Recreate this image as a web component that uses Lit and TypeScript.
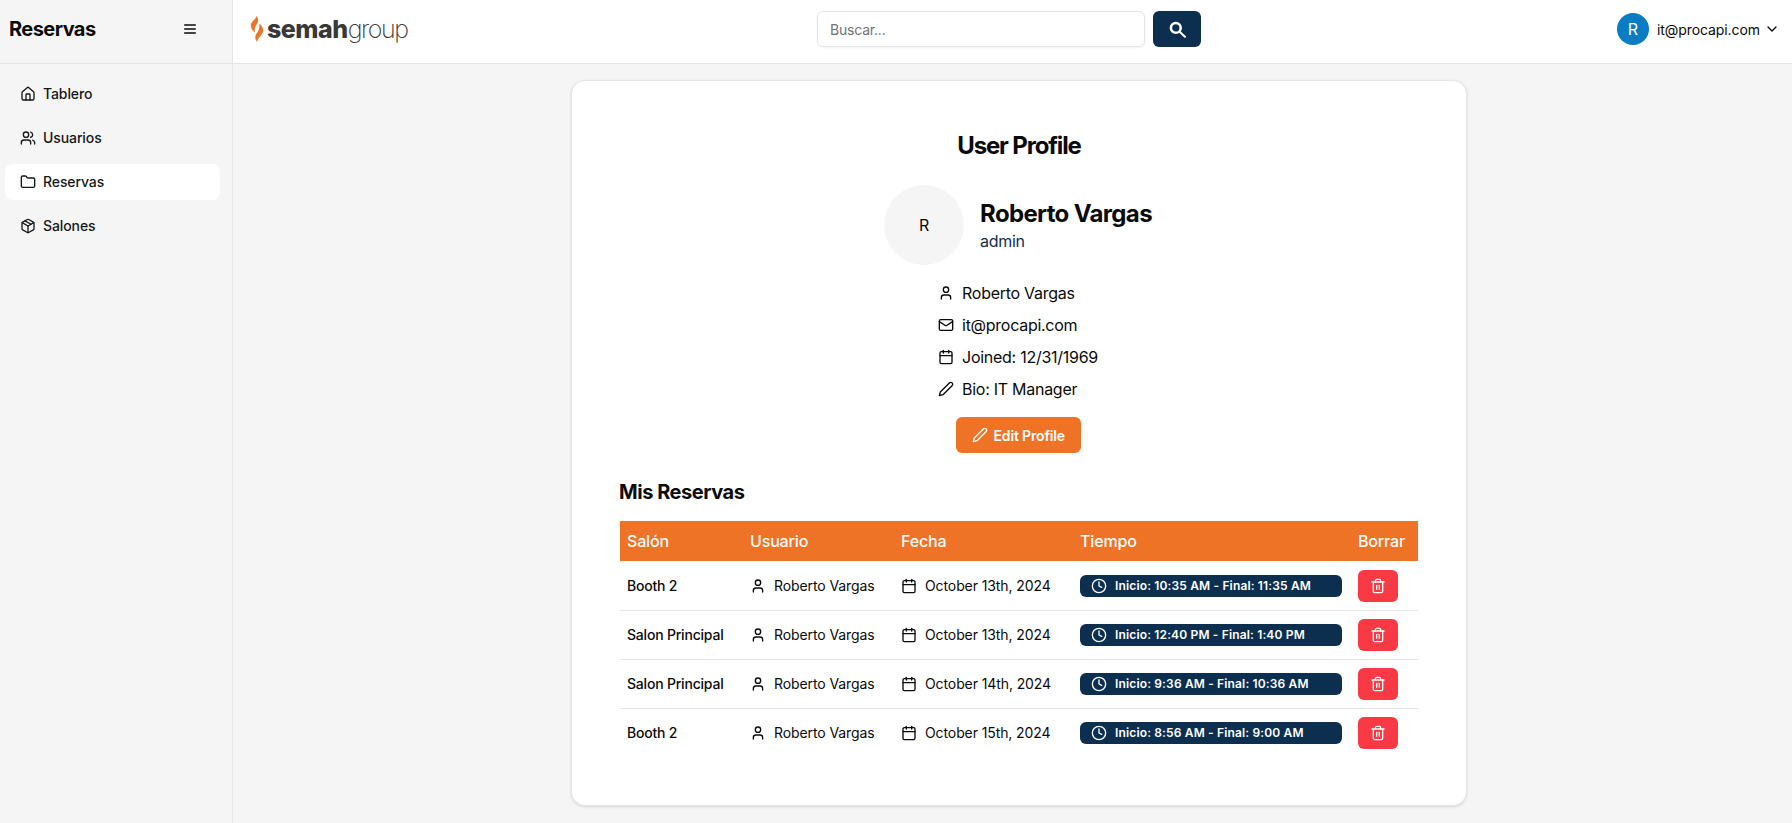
import { LitElement, html, svg, css } from 'lit';
import { customElement } from 'lit/decorators.js';

const lucide = (body: unknown, size = 16) => html`
  <svg class="icon" width=${size} height=${size} viewBox="0 0 24 24" fill="none" stroke="currentColor"
    stroke-width="2" stroke-linecap="round" stroke-linejoin="round">${body}</svg>
`;

const icons = {
  house: svg`<path d="M15 21v-8a1 1 0 0 0-1-1h-4a1 1 0 0 0-1 1v8"/><path d="M3 10a2 2 0 0 1 .709-1.528l7-5.999a2 2 0 0 1 2.582 0l7 5.999A2 2 0 0 1 21 10v9a2 2 0 0 1-2 2H5a2 2 0 0 1-2-2z"/>`,
  users: svg`<path d="M16 21v-2a4 4 0 0 0-4-4H6a4 4 0 0 0-4 4v2"/><circle cx="9" cy="7" r="4"/><path d="M22 21v-2a4 4 0 0 0-3-3.87"/><path d="M16 3.13a4 4 0 0 1 0 7.75"/>`,
  folder: svg`<path d="M20 20a2 2 0 0 0 2-2V8a2 2 0 0 0-2-2h-7.9a2 2 0 0 1-1.69-.9L9.6 3.9A2 2 0 0 0 7.93 3H4a2 2 0 0 0-2 2v13a2 2 0 0 0 2 2Z"/>`,
  box: svg`<path d="m7.5 4.27 9 5.15"/><path d="M21 8a2 2 0 0 0-1-1.73l-7-4a2 2 0 0 0-2 0l-7 4A2 2 0 0 0 3 8v8a2 2 0 0 0 1 1.73l7 4a2 2 0 0 0 2 0l7-4A2 2 0 0 0 21 16Z"/><path d="m3.3 7 8.7 5 8.7-5"/><path d="M12 22V12"/>`,
  menu: svg`<line x1="4" y1="6" x2="20" y2="6"/><line x1="4" y1="12" x2="20" y2="12"/><line x1="4" y1="18" x2="20" y2="18"/>`,
  user: svg`<path d="M19 21v-2a4 4 0 0 0-4-4H9a4 4 0 0 0-4 4v2"/><circle cx="12" cy="7" r="4"/>`,
  mail: svg`<rect width="20" height="16" x="2" y="4" rx="2"/><path d="m22 7-8.97 5.7a1.94 1.94 0 0 1-2.06 0L2 7"/>`,
  calendar: svg`<path d="M8 2v4"/><path d="M16 2v4"/><rect width="18" height="18" x="3" y="4" rx="2"/><path d="M3 10h18"/>`,
  pen: svg`<path d="M17 3a2.85 2.83 0 1 1 4 4L7.5 20.5 2 22l1.5-5.5Z"/>`,
  trash: svg`<path d="M3 6h18"/><path d="M19 6v14c0 1-1 2-2 2H7c-1 0-2-1-2-2V6"/><path d="M8 6V4c0-1 1-2 2-2h4c1 0 2 1 2 2v2"/><line x1="10" y1="11" x2="10" y2="17"/><line x1="14" y1="11" x2="14" y2="17"/>`,
  clock: svg`<circle cx="12" cy="12" r="10"/><polyline points="12 6 12 12 16 14"/>`,
  chevron: svg`<path d="m6 9 6 6 6-6"/>`,
};

interface Reserva {
  salon: string;
  fecha: string;
  tiempo: string;
}

const navItems = [
  { label: 'Tablero', icon: icons.house, active: false },
  { label: 'Usuarios', icon: icons.users, active: false },
  { label: 'Reservas', icon: icons.folder, active: true },
  { label: 'Salones', icon: icons.box, active: false },
];

const reservas: Reserva[] = [
  { salon: 'Booth 2', fecha: 'October 13th, 2024', tiempo: 'Inicio: 10:35 AM - Final: 11:35 AM' },
  { salon: 'Salon Principal', fecha: 'October 13th, 2024', tiempo: 'Inicio: 12:40 PM - Final: 1:40 PM' },
  { salon: 'Salon Principal', fecha: 'October 14th, 2024', tiempo: 'Inicio: 9:36 AM - Final: 10:36 AM' },
  { salon: 'Booth 2', fecha: 'October 15th, 2024', tiempo: 'Inicio: 8:56 AM - Final: 9:00 AM' },
];

@customElement('app-root')
export class AppRoot extends LitElement {
  static styles = css`
    :host {
      display: flex;
      height: 100vh;
      overflow: hidden;
      background: #f5f5f5;
      color: #0a0a0a;
      font-family: Inter, 'Liberation Sans', sans-serif;
      font-size: 14px;
    }

    .icon {
      flex: none;
      display: block;
    }

    .sidebar {
      width: 233px;
      flex: none;
      box-sizing: border-box;
      border-right: 1px solid #e5e5e5;
    }

    .sidebar-head {
      height: 64px;
      box-sizing: border-box;
      border-bottom: 1px solid #e5e5e5;
      padding: 0 34px 5px 9px;
      display: flex;
      align-items: center;
      justify-content: space-between;
    }

    .sidebar-title {
      font-size: 20px;
      font-weight: 700;
      letter-spacing: -0.55px;
    }

    .nav {
      display: flex;
      flex-direction: column;
      gap: 8px;
      padding: 12px 12px 0 5px;
    }

    .nav-item {
      height: 36px;
      box-sizing: border-box;
      padding: 0 15px 1px;
      border-radius: 8px;
      display: flex;
      align-items: center;
      gap: 7px;
      font-weight: 500;
      letter-spacing: -0.1px;
      color: #171717;
    }

    .nav-item.active {
      background: #fff;
    }

    .content {
      flex: 1;
      min-width: 0;
    }

    .topbar {
      height: 64px;
      box-sizing: border-box;
      background: #fff;
      border-bottom: 1px solid #e5e5e5;
      padding-bottom: 5px;
      display: grid;
      grid-template-columns: 584px 384px 1fr;
      align-items: center;
    }

    .logo {
      display: flex;
      align-items: center;
      padding-left: 17px;
      gap: 3px;
    }

    .wordmark {
      font-size: 25px;
      line-height: 30px;
      letter-spacing: -0.5px;
      color: #383838;
    }

    .wordmark b {
      font-weight: 800;
    }

    .wordmark span {
      font-weight: 200;
      letter-spacing: -1.4px;
    }

    .search {
      display: flex;
      gap: 8px;
    }

    .search-input {
      flex: 1;
      height: 36px;
      box-sizing: border-box;
      border: 1px solid #e5e5e5;
      border-radius: 6px;
      padding: 0 12px;
      display: flex;
      align-items: center;
      color: #737373;
      letter-spacing: -0.2px;
      box-shadow: 0 1px 2px rgba(0, 0, 0, 0.05);
    }

    .search-btn {
      width: 48px;
      height: 36px;
      border-radius: 6px;
      background: #0c2f4f;
      color: #fff;
      display: flex;
      align-items: center;
      justify-content: center;
    }

    .user {
      justify-self: end;
      padding-right: 12px;
      display: flex;
      align-items: center;
      gap: 8px;
      letter-spacing: -0.08px;
    }

    .user .icon {
      margin-left: -4px;
    }

    .user-avatar {
      width: 32px;
      height: 32px;
      border-radius: 50%;
      background: #0a7cc4;
      color: #fff;
      font-size: 16px;
      display: flex;
      align-items: center;
      justify-content: center;
    }

    .main {
      padding: 16px 0 0 338px;
    }

    .card {
      width: 896px;
      height: 726px;
      box-sizing: border-box;
      background: #fff;
      border: 1px solid #e5e5e5;
      border-radius: 14px;
      padding: 48px;
      box-shadow: 0 1px 3px rgba(0, 0, 0, 0.12);
    }

    .card h1 {
      margin: 0 0 23px;
      padding-top: 1px;
      font-size: 24px;
      line-height: 32px;
      font-weight: 700;
      text-align: center;
      letter-spacing: -1.15px;
    }

    .profile {
      display: flex;
      flex-direction: column;
      align-items: center;
      padding-right: 2px;
    }

    .profile-head {
      display: flex;
      align-items: center;
      gap: 16px;
    }

    .avatar {
      width: 80px;
      height: 80px;
      border-radius: 50%;
      background: #f5f5f5;
      font-size: 16px;
      display: flex;
      align-items: center;
      justify-content: center;
    }

    .name {
      padding-top: 1px;
      margin-bottom: -1px;
      font-size: 24px;
      line-height: 32px;
      font-weight: 700;
      letter-spacing: -0.65px;
    }

    .role {
      font-size: 16px;
      line-height: 24px;
      letter-spacing: -0.3px;
      color: #0c2f4f;
    }

    .details {
      margin-top: 16px;
      display: flex;
      flex-direction: column;
      gap: 8px;
    }

    .detail {
      display: flex;
      align-items: center;
      gap: 8px;
      font-size: 16px;
      line-height: 24px;
      letter-spacing: -0.27px;
    }

    .edit-btn {
      margin-top: 16px;
      height: 36px;
      box-sizing: border-box;
      width: 125px;
      padding: 0 16px;
      border-radius: 6px;
      background: #ef7326;
      color: #fff;
      font-weight: 600;
      letter-spacing: -0.15px;
      white-space: nowrap;
      display: flex;
      align-items: center;
      gap: 6px;
    }

    h2 {
      margin: 24px 0 15px -1px;
      padding-top: 1px;
      font-size: 20px;
      line-height: 28px;
      font-weight: 700;
      letter-spacing: -0.46px;
    }

    table {
      width: 100%;
      border-collapse: collapse;
      table-layout: fixed;
    }

    .col-salon { width: 122px; }
    .col-user { width: 151px; }
    .col-date { width: 179px; }
    .col-time { width: 278px; }

    th {
      height: 40px;
      padding: 0 8px;
      background: #ef7326;
      color: #fff;
      font-size: 16px;
      font-weight: 500;
      letter-spacing: -0.16px;
      text-align: left;
    }

    td {
      height: 49px;
      padding: 0 8px;
      box-sizing: border-box;
      border-bottom: 1px solid #e5e5e5;
      font-weight: 500;
      letter-spacing: -0.2px;
      white-space: nowrap;
    }

    tbody tr:first-child td {
      padding-top: 1px;
    }

    th:first-child,
    td:first-child {
      padding-left: 7px;
    }

    tr:last-child td {
      border-bottom: none;
    }

    .with-icon {
      display: flex;
      align-items: center;
      gap: 8px;
      font-weight: 400;
      letter-spacing: -0.1px;
    }

    .pill {
      height: 22px;
      width: 262px;
      box-sizing: border-box;
      padding: 0 11px;
      border-radius: 6px;
      background: #0c2f4f;
      color: #fff;
      font-size: 12px;
      font-weight: 600;
      letter-spacing: 0.15px;
      display: flex;
      align-items: center;
      gap: 8px;
    }

    .delete {
      width: 40px;
      height: 32px;
      border-radius: 6px;
      background: #f93a44;
      color: #fff;
      display: flex;
      align-items: center;
      justify-content: center;
    }
  `;

  private renderRow(r: Reserva) {
    return html`
      <tr>
        <td>${r.salon}</td>
        <td><div class="with-icon">${lucide(icons.user)}Roberto Vargas</div></td>
        <td><div class="with-icon">${lucide(icons.calendar)}${r.fecha}</div></td>
        <td><div class="pill">${lucide(icons.clock)}${r.tiempo}</div></td>
        <td><div class="delete">${lucide(icons.trash)}</div></td>
      </tr>
    `;
  }

  render() {
    return html`
      <aside class="sidebar">
        <div class="sidebar-head">
          <span class="sidebar-title">Reservas</span>
          ${lucide(icons.menu)}
        </div>
        <nav class="nav">
          ${navItems.map(
            (item) => html`
              <div class="nav-item ${item.active ? 'active' : ''}">${lucide(item.icon)}${item.label}</div>
            `
          )}
        </nav>
      </aside>

      <div class="content">
        <header class="topbar">
          <div class="logo">
            <svg width="14" height="26" viewBox="0 0 14 26" fill="#ef7326">
              <path d="M6.5 0C8.8 3 8.4 6 6.8 8.2 5.2 10.4 4.2 12.4 5 16.4 1.8 14.4 0 11 1.2 7.8 2.2 5 5.5 3.5 6.5 0Z"/>
              <path d="M9.3 7.8C12.2 10 14 13 12.8 16.2 11.6 19.6 8 21.5 7 26 4.8 23 4.7 20.2 6.3 18 7.9 15.8 10 13 9.3 7.8Z"/>
            </svg>
            <div class="wordmark"><b>semah</b><span>group</span></div>
          </div>
          <div class="search">
            <div class="search-input">Buscar...</div>
            <div class="search-btn">
              <svg class="icon" width="17" height="17" viewBox="0 0 16 16" fill="none" stroke="currentColor" stroke-linecap="round">
                <circle cx="6.4" cy="6.5" r="4.6" stroke-width="2.4"/>
                <line x1="10" y1="10.1" x2="15" y2="14.8" stroke-width="1.9"/>
              </svg>
            </div>
          </div>
          <div class="user">
            <div class="user-avatar">R</div>
            <span>it@procapi.com</span>
            ${lucide(icons.chevron)}
          </div>
        </header>

        <main class="main">
          <section class="card">
            <h1>User Profile</h1>
            <div class="profile">
              <div class="profile-head">
                <div class="avatar">R</div>
                <div>
                  <div class="name">Roberto Vargas</div>
                  <div class="role">admin</div>
                </div>
              </div>
              <div class="details">
                <div class="detail">${lucide(icons.user)}Roberto Vargas</div>
                <div class="detail">${lucide(icons.mail)}it@procapi.com</div>
                <div class="detail">${lucide(icons.calendar)}Joined: 12/31/1969</div>
                <div class="detail">${lucide(icons.pen)}Bio: IT Manager</div>
              </div>
              <div class="edit-btn">${lucide(icons.pen)}Edit Profile</div>
            </div>

            <h2>Mis Reservas</h2>
            <table>
              <colgroup>
                <col class="col-salon" />
                <col class="col-user" />
                <col class="col-date" />
                <col class="col-time" />
                <col />
              </colgroup>
              <thead>
                <tr>
                  <th>Salón</th>
                  <th>Usuario</th>
                  <th>Fecha</th>
                  <th>Tiempo</th>
                  <th>Borrar</th>
                </tr>
              </thead>
              <tbody>
                ${reservas.map((r) => this.renderRow(r))}
              </tbody>
            </table>
          </section>
        </main>
      </div>
    `;
  }
}
